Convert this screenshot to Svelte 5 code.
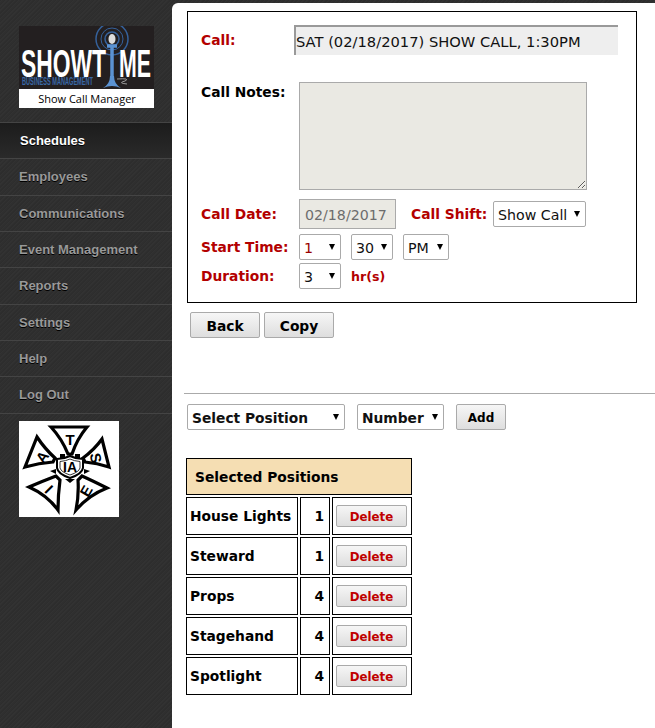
<script>
  const nav = ['Schedules', 'Employees', 'Communications', 'Event Management', 'Reports', 'Settings', 'Help', 'Log Out'];
  const positions = [
    { name: 'House Lights', count: 1 },
    { name: 'Steward', count: 1 },
    { name: 'Props', count: 4 },
    { name: 'Stagehand', count: 4 },
    { name: 'Spotlight', count: 4 }
  ];
</script>

<div class="page">
  <aside class="sidebar">
    <div class="logo">
      <svg width="135" height="82" viewBox="0 0 135 82">
        <rect width="135" height="63" fill="#231f20" />
        <g fill="none" stroke="#35619b">
          <circle cx="93" cy="13" r="7" stroke-width="1.500" />
          <circle cx="93" cy="13" r="11" />
          <circle cx="93" cy="13" r="16" stroke-width="1.500" />
        </g>
        <ellipse cx="93" cy="13" rx="3.500" ry="5" fill="#ddd" />
        <text x="2" y="51" class="show" textLength="85" lengthAdjust="spacingAndGlyphs">SHOWT</text>
        <text x="100" y="51" class="show" textLength="32" lengthAdjust="spacingAndGlyphs">ME</text>
        <path d="M88 20H98M93 20V52" fill="none" stroke="#5b93d3" stroke-width="3.500" />
        <path d="M84 62Q91 58 91 50H95Q95 58 102 62Q93 58 84 62Z" fill="#5b93d3" />
        <path d="M98 53Q112 52 106 55Q98 57 108 58" fill="none" stroke="#999" />
        <text x="3" y="59" class="biz" textLength="71" lengthAdjust="spacingAndGlyphs">BUSINESS MANAGEMENT</text>
        <rect y="63" width="135" height="19" fill="#fff" />
        <text x="68" y="77" class="sub" text-anchor="middle">Show Call Manager</text>
      </svg>
    </div>
    <nav>
      {#each nav as item, i}
        <a href="#top" class:active={i === 0}>{item}</a>
      {/each}
    </nav>
    <div class="union">
      <svg width="100" height="96" viewBox="0 0 100 96">
        <rect width="100" height="96" fill="#fff" />
        <g fill="#fff" stroke="#000" stroke-width="3.200" stroke-linejoin="miter">
          <path d="M32 6 L68 6 Q58 18 53 33 L49 33 Q43 18 32 6Z" />
          <path d="M18 16 Q26 28 36 37 L34 41 Q20 42 6 46Z" />
          <path d="M83 18 Q75 29 64 37 L66 41 Q78 42 90 46Z" />
          <path d="M10 66 Q24 60 37 55 L41 59 Q39 74 39 89 Q28 74 10 66Z" />
          <path d="M88 67 Q74 60 63 55 L59 59 Q60 74 57 89 Q70 74 88 67Z" />
        </g>
        <path d="M41 33H46V37H41ZM56 33H61V37H56ZM31 50L37 48V53ZM71 50L65 48V53ZM46 58L51 62L56 58Z" fill="#000" />
        <path d="M38 38 Q45 38 51 35 Q57 38 64 38 L64 47 Q63 53 51 57 Q39 53 38 47Z" fill="#fff" stroke="#000" stroke-width="2" />
        <path d="M41 40.500 Q47 40 51 38 Q55 40 61 40.500 L61 47 Q60 51 51 54 Q42 51 41 47Z" fill="none" stroke="#000" stroke-width="0.800" />
        <text x="51" y="18" class="ua">T</text>
        <text transform="translate(23 36) rotate(-55)" class="ua">A</text>
        <text transform="translate(77 37) rotate(80)" class="ua">S</text>
        <text transform="translate(30 68) rotate(45)" class="ua">I</text>
        <text transform="translate(67 70) rotate(-60)" class="ua">E</text>
        <text x="51" y="46" class="ia" textLength="14" lengthAdjust="spacingAndGlyphs">IA</text>
      </svg>
    </div>
  </aside>

  <main class="content">
    <section class="box">
      <div class="row call">
        <span class="label red">Call:</span>
        <input class="callname" value="SAT (02/18/2017) SHOW CALL, 1:30PM" readonly />
      </div>
      <div class="row notes">
        <span class="label">Call Notes:</span>
        <textarea></textarea>
      </div>
      <div class="row date">
        <span class="label red">Call Date:</span>
        <input class="dateinput" value="02/18/2017" disabled />
        <span class="label red shift">Call Shift:</span>
        <span class="sel w93"><select><option>Show Call</option></select></span>
      </div>
      <div class="row time">
        <span class="label red">Start Time:</span>
        <span class="sel w42"><select class="redtext"><option>1</option></select></span>
        <span class="sel w42"><select><option>30</option></select></span>
        <span class="sel w46"><select><option>PM</option></select></span>
      </div>
      <div class="row dur">
        <span class="label red">Duration:</span>
        <span class="sel w42"><select><option>3</option></select></span>
        <span class="red hrs">hr(s)</span>
      </div>
    </section>

    <div class="actions">
      <button>Back</button>
      <button>Copy</button>
    </div>

    <hr />

    <div class="adder">
      <span class="sel w158 bold"><select><option>Select Position</option></select></span>
      <span class="sel w87 bold"><select><option>Number</option></select></span>
      <button class="add">Add</button>
    </div>

    <table>
      <colgroup>
        <col class="name" />
        <col class="count" />
        <col class="del" />
      </colgroup>
      <thead>
        <tr><th colspan="3">Selected Positions</th></tr>
      </thead>
      <tbody>
        {#each positions as p}
          <tr>
            <td>{p.name}</td>
            <td class="num">{p.count}</td>
            <td><button>Delete</button></td>
          </tr>
        {/each}
      </tbody>
    </table>
  </main>
</div>

<style>
  :global(body) {
    margin: 0;
    background: #fff;
  }

  .page {
    display: flex;
    height: 728px;
    overflow: hidden;
    font-family: "DejaVu Sans", Verdana, sans-serif;
    font-size: 13.8px;
    color: #000;
    background: #2f2f2f repeating-linear-gradient(135deg, #2d2d2d 0 1px, #323232 1px 2px, #2f2f2f 2px 3px);
  }

  .sidebar {
    width: 172px;
    flex: none;
    font-family: "Liberation Sans", Arial, sans-serif;
  }

  .logo {
    height: 122px;
    padding: 26px 0 0 19px;
    box-sizing: border-box;
  }

  .logo svg,
  .union svg {
    display: block;
  }

  .show {
    font: bold 39px "Liberation Sans", Arial, sans-serif;
    fill: #fff;
  }

  .biz {
    font: bold 10px "Liberation Sans", Arial, sans-serif;
    fill: #3a68a6;
  }

  .sub {
    font: 11px "Open Sans", sans-serif;
    fill: #000;
  }

  .ua {
    font: bold 15px "Liberation Sans", Arial, sans-serif;
    text-anchor: middle;
    dominant-baseline: central;
    fill: #000;
  }

  .ia {
    font: bold 14px "Liberation Sans", Arial, sans-serif;
    text-anchor: middle;
    dominant-baseline: central;
    fill: #000;
  }

  nav {
    border-top: 1px solid #444;
  }

  nav a {
    display: block;
    height: 35.35px;
    line-height: 35px;
    padding-left: 19px;
    font-size: 13px;
    font-weight: bold;
    color: #999;
    text-decoration: none;
    border-bottom: 1px solid #444;
    text-shadow: 0 1px 0 #000;
  }

  nav a.active {
    color: #fff;
    padding-left: 20px;
    background: linear-gradient(#1c1c1c, #2a2a2a);
  }

  .union {
    padding: 7px 0 0 19px;
  }

  .content {
    flex: 1;
    min-width: 0;
    margin-top: 3px;
    background: #fff;
    border-top-left-radius: 6px;
    padding: 8px 0 0 15px;
  }

  .box {
    border: 1px solid #000;
    padding: 13px 0 0 13px;
    height: 277px;
    width: 435px;
  }

  .row {
    display: flex;
    align-items: center;
  }

  .label {
    font-weight: bold;
    white-space: nowrap;
  }

  .red {
    color: #b30000;
    font-weight: bold;
  }

  .call .label {
    width: 93px;
  }

  .callname {
    width: 324px;
    height: 30px;
    box-sizing: border-box;
    padding: 1px 0 0 0;
    border-width: 2px 0 0 2px;
    border-style: solid;
    border-color: #999;
    background: #eee;
    font: 14.7px "DejaVu Sans", Verdana, sans-serif;
    color: #111;
    outline: none;
  }

  .notes {
    margin-top: 27px;
    align-items: flex-start;
  }

  .notes .label {
    width: 98px;
    margin-top: 2px;
  }

  textarea {
    width: 288px;
    height: 108px;
    box-sizing: border-box;
    border: 1px solid #aaa;
    background: #eae9e3;
    padding: 0;
    margin: 0;
    display: block;
    outline: none;
  }

  .date {
    margin-top: 9px;
  }

  .date .label:first-child,
  .time .label,
  .dur .label {
    width: 98px;
  }

  .dateinput {
    width: 97px;
    height: 30px;
    box-sizing: border-box;
    border: 1px solid #aaa;
    background: #eae9e3;
    padding: 1px 0 0 5px;
    font: 14.2px "DejaVu Sans", Verdana, sans-serif;
    color: #6d6d6d;
  }

  .shift {
    width: 82px;
    margin-left: 15px;
  }

  .time {
    margin-top: 5px;
    gap: 10px;
  }

  .time .label {
    margin-right: -10px;
  }

  .dur {
    margin-top: 3px;
  }

  .hrs {
    margin-left: 10px;
    font-size: 12.6px;
  }

  .sel {
    position: relative;
    display: block;
    height: 26px;
    flex: none;
  }

  .sel::after {
    content: "";
    position: absolute;
    right: 6.500px;
    top: 10px;
    border-style: solid;
    border-width: 6px 3.500px 0;
    border-color: #000 transparent transparent;
    pointer-events: none;
  }

  .sel select {
    appearance: none;
    display: block;
    width: 100%;
    height: 100%;
    box-sizing: border-box;
    border: 1px solid #aaa;
    border-radius: 2px;
    background: #fff;
    padding: 2px 0 0 4px;
    margin: 0;
    font: 14.2px "DejaVu Sans", Verdana, sans-serif;
    color: #111;
  }

  .sel select.redtext {
    color: #900;
  }

  .sel.bold select {
    font-weight: bold;
    font-size: 13.8px;
  }

  .w42 { width: 42px; }
  .w46 { width: 46px; }
  .w87 { width: 87px; }
  .w93 { width: 93px; }
  .w158 { width: 158px; }

  button {
    height: 26px;
    box-sizing: border-box;
    border: 1px solid #aaa;
    border-radius: 2px;
    background: linear-gradient(#f6f6f6, #dedede);
    font: bold 13.8px "DejaVu Sans", Verdana, sans-serif;
    color: #000;
    padding: 1px 0 0 0;
  }

  .actions {
    display: flex;
    gap: 4px;
    margin: 9px 0 0 3px;
  }

  .actions button {
    width: 70px;
  }

  hr {
    height: 1px;
    border: 0;
    background: #aaa;
    margin: 55px 0 0 -3px;
  }

  .adder {
    display: flex;
    align-items: center;
    margin-top: 10px;
  }

  .adder .w87 {
    margin-left: 12px;
  }

  .add {
    width: 50px;
    margin-left: 12px;
    font-size: 12px;
  }

  table {
    border-collapse: separate;
    border-spacing: 2px;
    table-layout: fixed;
    margin: 26px 0 0 -3px;
    width: 230px;
    font-weight: bold;
  }

  col.name { width: 112px; }
  col.count { width: 30px; }
  col.del { width: 80px; }

  th {
    height: 37px;
    box-sizing: border-box;
    padding: 1px 0 0 8px;
    text-align: left;
    background: wheat;
    border: 1px solid #000;
    font-size: 13.8px;
  }

  td {
    height: 38px;
    box-sizing: border-box;
    padding: 0 0 0 3px;
    border: 1px solid #000;
    white-space: nowrap;
  }

  td.num {
    padding: 0 5px 0 0;
    text-align: right;
  }

  td button {
    display: block;
    width: 71px;
    height: 22px;
    color: #c00000;
    font-size: 11.8px;
  }
</style>
